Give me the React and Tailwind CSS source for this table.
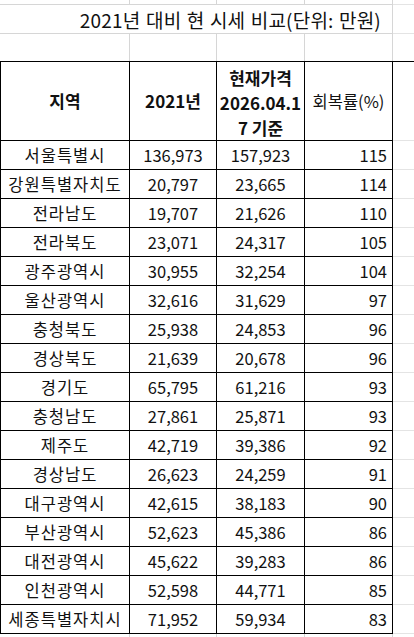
import React from "react";

const rows = [
  ["서울특별시", "136,973", "157,923", "115"],
  ["강원특별자치도", "20,797", "23,665", "114"],
  ["전라남도", "19,707", "21,626", "110"],
  ["전라북도", "23,071", "24,317", "105"],
  ["광주광역시", "30,955", "32,254", "104"],
  ["울산광역시", "32,616", "31,629", "97"],
  ["충청북도", "25,938", "24,853", "96"],
  ["경상북도", "21,639", "20,678", "96"],
  ["경기도", "65,795", "61,216", "93"],
  ["충청남도", "27,861", "25,871", "93"],
  ["제주도", "42,719", "39,386", "92"],
  ["경상남도", "26,623", "24,259", "91"],
  ["대구광역시", "42,615", "38,183", "90"],
  ["부산광역시", "52,623", "45,386", "86"],
  ["대전광역시", "45,622", "39,283", "86"],
  ["인천광역시", "52,598", "44,771", "85"],
  ["세종특별자치시", "71,952", "59,934", "83"],
];

const cols = "grid grid-cols-[130px_87px_88px_88px_21px]";
const cell = "border-r border-b border-black flex items-center";

const App = () => {
  return (
    <div
      className="w-[414px] h-[637px] bg-white overflow-hidden text-[#111]"
      style={{ fontFamily: '"Noto Sans CJK KR", "Noto Sans", sans-serif' }}
    >
      {/* top gridline row */}
      <div className={`${cols} h-[5px]`}>
        <div className="border-r border-b border-[#d6d6d6]" />
        <div className="border-r border-b border-[#d6d6d6]" />
        <div className="border-r border-b border-[#d6d6d6]" />
        <div className="border-r border-b border-[#d6d6d6]" />
        <div className="border-b border-[#e4e4e4]" />
      </div>

      {/* title */}
      <div className={`${cols} h-[29px]`}>
        <div className="col-span-4 border-r border-b border-[#d6d6d6] flex items-center justify-end pr-[11px] text-[19px] leading-none whitespace-nowrap tracking-[0.2px] [word-spacing:1px]">
          2021년 대비 현 시세 비교(단위: 만원)
        </div>
        <div className="border-b border-[#e4e4e4]" />
      </div>

      {/* blank row */}
      <div className={`${cols} h-[27px]`}>
        <div className="border-r border-[#d6d6d6]" />
        <div className="border-r border-[#d6d6d6]" />
        <div className="border-r border-[#d6d6d6]" />
        <div className="border-r border-[#d6d6d6]" />
        <div />
      </div>

      {/* table */}
      <div className="border-t border-black">
        <div className={`${cols} h-[79px] text-[17px]`}>
          <div className={`${cell} border-l justify-center font-bold`}>지역</div>
          <div className={`${cell} justify-center font-bold`}>2021년</div>
          <div className={`${cell} flex-col justify-center font-bold leading-[25px] pt-[3px] whitespace-nowrap`}>
            <span>현재가격</span>
            <span>2026.04.1</span>
            <span>7 기준</span>
          </div>
          <div className={`${cell} justify-center text-[16.5px]`}>회복률(%)</div>
          <div className="border-b border-[#e4e4e4]" />
        </div>

        {rows.map((r, i) => (
          <div key={i} className={`${cols} h-[29px] text-[16.5px]`}>
            <div className={`${cell} border-l justify-center whitespace-nowrap tracking-[1px]`}>{r[0]}</div>
            <div className={`${cell} justify-center`}>{r[1]}</div>
            <div className={`${cell} justify-center`}>{r[2]}</div>
            <div className={`${cell} justify-end pr-[5px]`}>{r[3]}</div>
            <div className="border-b border-[#e4e4e4]" />
          </div>
        ))}

        <div className={`${cols} h-[4px]`}>
          <div className="border-r border-[#d6d6d6]" />
          <div className="border-r border-[#d6d6d6]" />
          <div className="border-r border-[#d6d6d6]" />
          <div className="border-r border-[#d6d6d6]" />
          <div />
        </div>
      </div>
    </div>
  );
};

export default App;
